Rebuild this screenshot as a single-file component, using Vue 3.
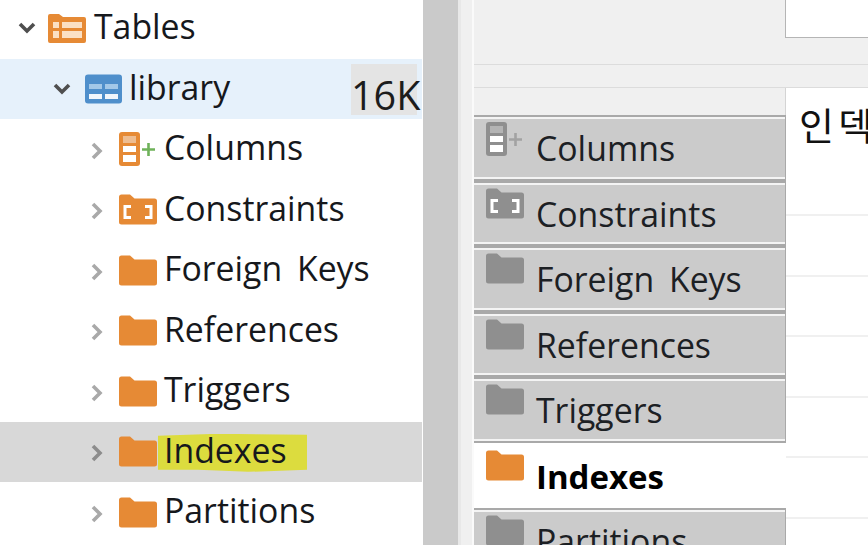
<script setup>
const children = [
  { label: 'Columns', icon: 'columns' },
  { label: 'Constraints', icon: 'constraints' },
  { label: 'Foreign Keys', icon: 'folder' },
  { label: 'References', icon: 'folder' },
  { label: 'Triggers', icon: 'folder' },
  { label: 'Indexes', icon: 'folder', hover: true, marked: true },
  { label: 'Partitions', icon: 'folder' }
]
const gridLines = [0, 1, 2, 3, 4, 5]
const folderPath = 'M0 3a2.5 2.5 0 0 1 2.5-2.5h8.5l4.5 4h20a2.5 2.5 0 0 1 2.5 2.5v21a2.5 2.5 0 0 1-2.5 2.5H2.5a2.5 2.5 0 0 1-2.5-2.5z'
</script>

<template>
  <div class="screen">
    <section class="tree">
      <div class="row level0">
        <svg class="chev" width="18" height="12" viewBox="0 0 18 12"><path d="M2 2l7 7 7-7" /></svg>
        <svg width="38" height="30" viewBox="0 0 38 30">
          <path fill="#e68a35" d="M0 3a2 2 0 0 1 2-2h9l4 3h21a2 2 0 0 1 2 2v22a2 2 0 0 1-2 2H2a2 2 0 0 1-2-2z" />
          <path fill="#fbe0c4" d="M5 9h6v6H5zM14 9h20v6H14zM5 18h6v7H5zM14 18h20v7H14z" />
        </svg>
        <span class="label">Tables</span>
      </div>
      <div class="row level1 selected">
        <svg class="chev" width="18" height="12" viewBox="0 0 18 12"><path d="M2 2l7 7 7-7" /></svg>
        <svg width="37" height="30" viewBox="0 0 37 30">
          <rect width="37" height="29" y="0.5" rx="3" fill="#4f8fcb" />
          <path fill="#a3c8e8" d="M4 10h13v5H4zM20 10h13v5H20z" />
          <path fill="#f2f7fc" d="M4 20h13v5H4zM20 20h13v5H20z" />
        </svg>
        <span class="label">library</span>
        <span class="size">16K</span>
      </div>
      <div v-for="c in children" :key="c.label" class="row level2" :class="{ hover: c.hover }">
        <svg class="chev right" width="12" height="18" viewBox="0 0 12 18"><path d="M2 2l7 7-7 7" /></svg>
        <span class="ico-slot">
          <svg v-if="c.icon === 'columns'" width="38" height="34" viewBox="0 0 38 34">
            <rect width="21" height="34" rx="3" fill="#e68a35" />
            <path fill="#eebd91" d="M4 4h13v7H4z" />
            <path fill="#fff" d="M4 14h13v6H4zM4 23h13v7H4z" />
            <path d="M23 17.5h13M29.5 11v13" stroke="#6fb25a" stroke-width="2.6" fill="none" />
          </svg>
          <svg v-else-if="c.icon === 'constraints'" width="38" height="31" viewBox="0 0 38 31">
            <path fill="#e68a35" :d="folderPath" />
            <path fill="none" stroke="#fff" stroke-width="3" d="M12 12.5H6v11h6M26 12.5h6v11h-6" />
          </svg>
          <svg v-else width="38" height="31" viewBox="0 0 38 31">
            <path fill="#e68a35" :d="folderPath" />
          </svg>
        </span>
        <span class="label" :class="{ marked: c.marked }">{{ c.label }}</span>
      </div>
    </section>

    <div class="splitter"></div>
    <div class="gutter"></div>

    <section class="panel">
      <div class="toolbar">
        <div class="toolbar-fill"></div>
        <div class="input-box"></div>
      </div>
      <div class="strip"></div>
      <div class="body">
        <nav class="tabs">
          <div class="tabs-head"></div>
          <div v-for="c in children" :key="c.label" class="tab" :class="{ active: c.marked }">
            <span class="tab-ico">
              <svg v-if="c.icon === 'columns'" width="38" height="34" viewBox="0 0 38 34">
                <rect width="21" height="34" rx="3" fill="#8f8f8f" />
                <path fill="#b4b4b4" d="M4 4h13v7H4z" />
                <path fill="#fff" d="M4 14h13v6H4zM4 23h13v7H4z" />
                <path d="M23 17.5h13M29.5 11v13" stroke="#a2a2a2" stroke-width="2.6" fill="none" />
              </svg>
              <svg v-else-if="c.icon === 'constraints'" width="38" height="31" viewBox="0 0 38 31">
                <path fill="#8f8f8f" :d="folderPath" />
                <path fill="none" stroke="#fff" stroke-width="3" d="M12 12.5H6v11h6M26 12.5h6v11h-6" />
              </svg>
              <svg v-else width="38" height="31" viewBox="0 0 38 31">
                <path :fill="c.marked ? '#e68a35' : '#8f8f8f'" :d="folderPath" />
              </svg>
            </span>
            <span class="tab-label">{{ c.label }}</span>
          </div>
        </nav>
        <div class="content">
          <div class="content-head"><span class="korean">인덱스</span></div>
          <div v-for="n in gridLines" :key="n" class="grid-row"></div>
        </div>
      </div>
    </section>
  </div>
</template>

<style>
html, body { margin: 0; background: #fff; overflow: hidden; }
</style>

<style scoped>
.screen {
  width: 868px;
  height: 545px;
  display: flex;
  overflow: hidden;
  background: #fff;
  font-family: "Open Sans", "Noto Sans", sans-serif;
  word-spacing: 6px;
  color: #16181c;
}
.tree { width: 422px; flex: none; margin-top: -2px; }
.row {
  position: relative;
  height: 60.5px;
  display: flex;
  align-items: center;
  font-size: 33.8px;
  box-sizing: border-box;
}
.label { line-height: 1; white-space: nowrap; position: relative; top: -1px; }
.level0 { padding-left: 18px; }
.level0 .chev { margin-right: 12px; }
.level0 .label { margin-left: 8px; }
.level1 { padding-left: 53px; background: #e6f1fb; }
.level1 .chev { margin-right: 14px; }
.level1 .label { margin-left: 7px; }
.level2 { padding-left: 91px; }
.level2 .chev { margin-right: 16px; margin-top: 3px; }
.ico-slot { width: 38px; display: flex; margin-right: 7px; }
.chev path { fill: none; stroke: #4f4f4f; stroke-width: 3.6; }
.chev.right path { stroke: #a9a9a9; }
.hover { background: #d8d8d8; }
.hover .chev path { stroke: #8c8c8c; }
.marked { z-index: 0; }
.marked::before {
  content: "";
  position: absolute;
  z-index: -1;
  left: -6px;
  top: 0;
  width: 149px;
  height: 39px;
  background: #dcdc3e;
  clip-path: polygon(0 2px, 60px 0, 100% 1px, 100% 36px, 90px 38px, 40px 36px, 0 36px);
}
.size {
  position: absolute;
  left: 351px;
  top: 5px;
  width: 66px;
  height: 51px;
  background: #e4e4e4;
  font-size: 39.5px;
  line-height: 62px;
  white-space: nowrap;
  color: #1c1c1c;
}
.splitter { width: 35px; flex: none; margin-left: 1px; background: #cacaca; }
.gutter { width: 16px; flex: none; background: #f0f0f0; border-left: 3px solid #e8e8e8; border-right: 2px solid #fafafa; box-sizing: border-box; }
.panel { flex: 1; min-width: 0; display: flex; flex-direction: column; background: #f0f0f0; }
.toolbar { height: 64px; display: flex; align-items: flex-start; flex: none; border-bottom: 1px solid #dcdcdc; }
.toolbar-fill { width: 311px; flex: none; }
.input-box { flex: 1; height: 38px; background: #fff; border-left: 1px solid #b5b5b5; border-bottom: 1px solid #b5b5b5; box-sizing: border-box; }
.strip { height: 22px; flex: none; border-bottom: 1px solid #dcdcdc; }
.body { flex: 1; display: flex; min-height: 0; overflow: hidden; }
.tabs { width: 312px; flex: none; }
.tabs-head { height: 27px; border-right: 1px solid #d4d4d4; box-sizing: border-box; }
.tab {
  height: 65.5px;
  box-sizing: border-box;
  display: flex;
  align-items: center;
  position: relative;
  background: #cbcbcb;
  border-top: 2px solid #a9a9a9;
  border-bottom: 2px solid #a9a9a9;
  border-right: 1px solid #a9a9a9;
  box-shadow: inset 0 2px 0 #f4f4f4, inset 0 -2px 0 #f4f4f4;
}
.tab.active { background: #fff; border: none; box-shadow: none; }
.tab-ico { position: absolute; left: 12px; top: 5px; display: flex; }
.tab.active .tab-ico { top: 7px; }
.tab-label { margin-left: 62px; margin-top: 3px; font-size: 33.8px; line-height: 1; white-space: nowrap; color: #1c2024; }
.tab.active .tab-label { font-size: 33px; font-weight: 700; color: #000; }
.content { flex: 1; min-width: 0; background: #fff; overflow: hidden; }
.content-head { height: 128px; box-sizing: border-box; border-bottom: 2px solid #f0f0f0; padding: 13px 0 0 13px; white-space: nowrap; }
.korean { font-family: "Noto Sans CJK KR", sans-serif; font-size: 38px; line-height: 46px; letter-spacing: 4px; color: #111; }
.grid-row { height: 60.5px; box-sizing: border-box; border-bottom: 2px solid #f0f0f0; }
</style>
